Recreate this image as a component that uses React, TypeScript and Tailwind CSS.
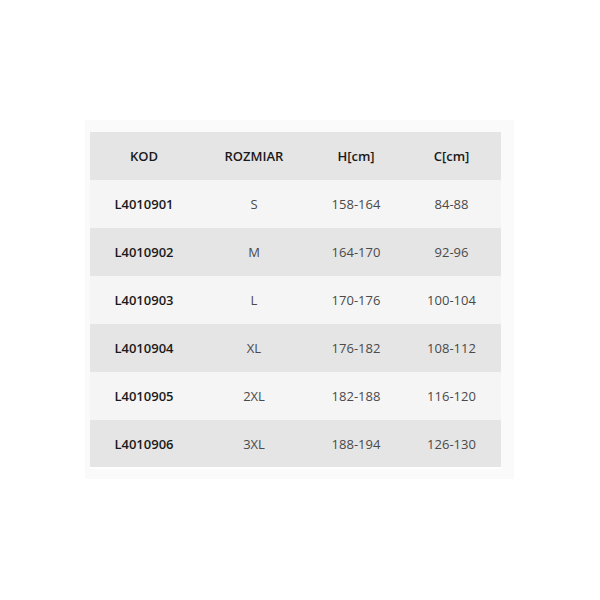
export default function App() {
  const rows = [
    ["L4010901", "S", "158-164", "84-88"],
    ["L4010902", "M", "164-170", "92-96"],
    ["L4010903", "L", "170-176", "100-104"],
    ["L4010904", "XL", "176-182", "108-112"],
    ["L4010905", "2XL", "182-188", "116-120"],
    ["L4010906", "3XL", "188-194", "126-130"],
  ];
  return (
    <div className="w-[600px] h-[600px] bg-white pt-[120px] pl-[85px]" style={{ fontFamily: '"Open Sans", sans-serif' }}>
      <div className="w-[429px] bg-[#fafafa] pt-[12px] pl-[5px] pb-[10px]">
        <table className="w-[411px] border-collapse text-[13px] border-b-2 border-white">
          <thead>
            <tr className="bg-[#e5e5e5] h-[48px]">
              <th className="w-[108px] pt-[2px] font-semibold text-[#1a1a1a] text-center">KOD</th>
              <th className="w-[112px] pt-[2px] font-semibold text-[#1a1a1a] text-center">ROZMIAR</th>
              <th className="w-[92px] pt-[2px] font-semibold text-[#1a1a1a] text-center">H[cm]</th>
              <th className="w-[99px] pt-[2px] font-semibold text-[#1a1a1a] text-center">C[cm]</th>
            </tr>
          </thead>
          <tbody>
            {rows.map((r, i) => (
              <tr key={i} className={i % 2 === 0 ? "bg-[#f5f5f5] h-[48px]" : "bg-[#e5e5e5] h-[48px]"}>
                <td className="pt-[2px] text-center font-semibold text-[#1a1a1a]">{r[0]}</td>
                <td className="pt-[2px] text-center text-[#4a4a4a]">{r[1]}</td>
                <td className="pt-[2px] text-center text-[#4a4a4a]">{r[2]}</td>
                <td className="pt-[2px] text-center text-[#4a4a4a]">{r[3]}</td>
              </tr>
            ))}
          </tbody>
        </table>
      </div>
    </div>
  );
}
